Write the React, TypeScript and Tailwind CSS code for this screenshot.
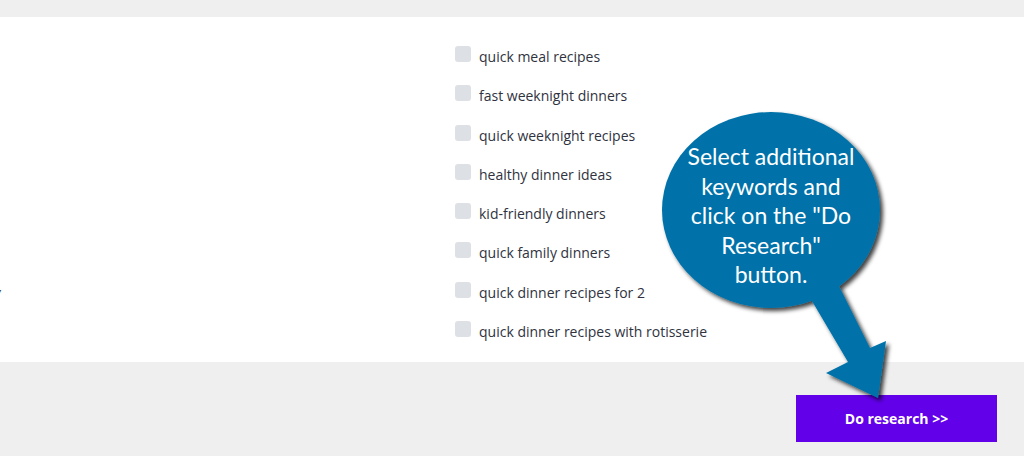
import React from "react";

const items = [
  "quick meal recipes",
  "fast weeknight dinners",
  "quick weeknight recipes",
  "healthy dinner ideas",
  "kid-friendly dinners",
  "quick family dinners",
  "quick dinner recipes for 2",
  "quick dinner recipes with rotisserie",
];

export default function App() {
  return (
    <div
      className="relative h-[456px] w-[1024px] overflow-hidden bg-[#efefef]"
      style={{ fontFamily: '"Open Sans", "Noto Sans", sans-serif' }}
    >
      <div className="mt-[17px] flex h-[345px] bg-white pt-[29px]">
        <div className="w-[455px] overflow-hidden pt-[1px]">
          {items.map((_, i) => (
            <div key={i} className="h-[39.3px] text-[14px] leading-[20px] text-[#333]">
              {i === 6 ? <span className="-ml-[6px] italic">y</span> : null}
            </div>
          ))}
        </div>
        <div className="flex flex-col">
          {items.map((t) => (
            <div key={t} className="flex h-[39.3px] items-start gap-[8px]">
              <span className="block h-[16px] w-[16px] shrink-0 rounded-[3px] bg-[#dde0e4]" />
              <span className="mt-[1px] text-[14px] leading-[20px] text-[#2f3340]">{t}</span>
            </div>
          ))}
        </div>
      </div>
      <div className="flex justify-end pr-[27px] pt-[33px]">
        <button className="h-[47px] w-[201px] bg-[#6200ea] text-[14px] font-bold text-white">
          Do research &gt;&gt;
        </button>
      </div>

      <svg
        className="pointer-events-none absolute left-0 top-0"
        width="1024"
        height="456"
        viewBox="0 0 1024 456"
      >
        <defs>
          <filter id="sh" x="-20%" y="-20%" width="140%" height="140%">
            <feDropShadow dx="3" dy="3" stdDeviation="2" floodColor="#000" floodOpacity="0.75" />
          </filter>
        </defs>
        <g filter="url(#sh)" fill="#0072a9">
          <ellipse cx="771" cy="210" rx="109" ry="98" />
          <polygon points="806,292 838,284 870,348 886,341 878,398 826,373 848,362 812,301" />
        </g>
      </svg>
      <div
        className="absolute left-[662px] top-[142px] w-[218px] text-center text-[23px] leading-[29.6px] text-white"
        style={{ fontFamily: 'Lato, "Open Sans", sans-serif' }}
      >
        Select additional
        <br />
        keywords and
        <br />
        click on the "Do
        <br />
        Research"
        <br />
        button.
      </div>
    </div>
  );
}
